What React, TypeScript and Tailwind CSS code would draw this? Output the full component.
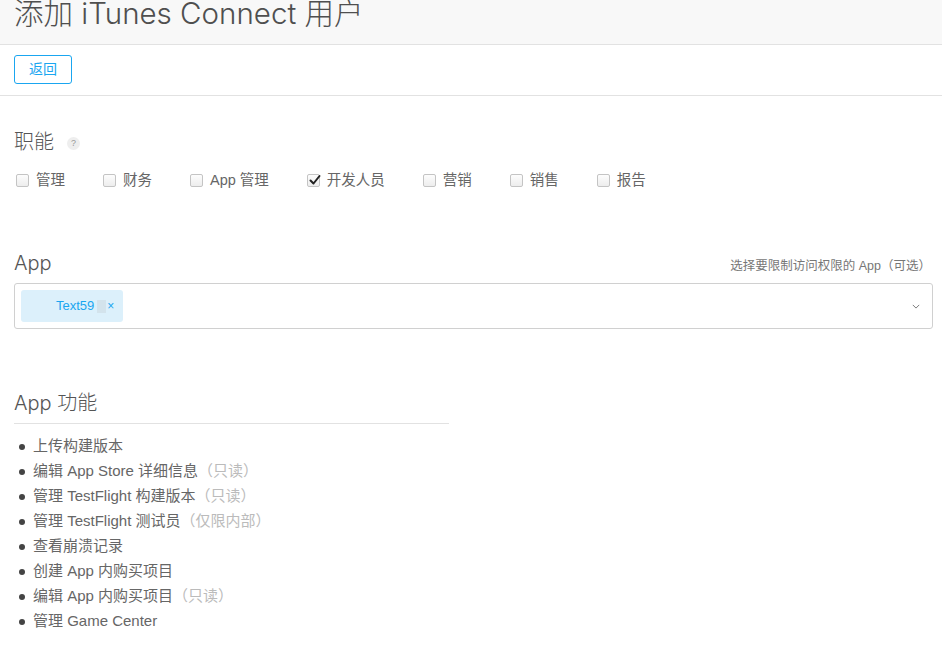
import React from "react";

const roles = [
  { label: "管理", checked: false },
  { label: "财务", checked: false },
  { label: "App 管理", checked: false },
  { label: "开发人员", checked: true },
  { label: "营销", checked: false },
  { label: "销售", checked: false },
  { label: "报告", checked: false },
];

const features: { text: string; note?: string }[] = [
  { text: "上传构建版本" },
  { text: "编辑 App Store 详细信息", note: "（只读）" },
  { text: "管理 TestFlight 构建版本", note: "（只读）" },
  { text: "管理 TestFlight 测试员", note: "（仅限内部）" },
  { text: "查看崩溃记录" },
  { text: "创建 App 内购买项目" },
  { text: "编辑 App 内购买项目", note: "（只读）" },
  { text: "管理 Game Center" },
];

const bodyFont = "font-['Liberation_Sans','Noto_Sans_CJK_SC',sans-serif]";
const headFont = "font-['Inter','Noto_Sans_CJK_SC',sans-serif] font-light";

function Checkbox({ checked }: { checked: boolean }) {
  return (
    <span className="relative w-[13px] h-[13px] border border-[#c4c4c4] rounded-[2px] bg-gradient-to-b from-[#fdfdfd] to-[#ededed] shrink-0">
      {checked && (
        <svg viewBox="0 0 14 14" className="absolute left-[0px] top-[-2px] w-[14px] h-[14px]">
          <path d="M2.5 7.5 L5.5 10.5 L11.5 3" fill="none" stroke="#222" strokeWidth="2" strokeLinecap="round" strokeLinejoin="round" />
        </svg>
      )}
    </span>
  );
}

export default function App() {
  return (
    <div className={`w-full min-h-screen bg-white text-[#666] ${bodyFont}`}>
      <div className="h-[45px] bg-[#f8f8f8] border-b border-[#e2e2e2] px-[14px] overflow-hidden">
        <h1 className={`text-[29.5px] leading-[30px] -mt-[2px] text-[#4f4f4f] whitespace-nowrap ${headFont}`}>
          添加 iTunes Connect 用户
        </h1>
      </div>

      <div className="h-[51px] px-[14px] pt-[10px] border-b border-[#e2e2e2]">
        <button className="w-[58px] h-[29px] border border-[#1aa6f0] rounded-[3px] text-[14px] text-[#1aa6f0] bg-white">
          返回
        </button>
      </div>

      <div className="pl-[14px] pr-[9px]">
        <div className="mt-[32px] flex items-center h-[28px]">
          <span className={`text-[20px] leading-[28px] text-[#555] ${headFont}`}>职能</span>
          <span className="ml-[13px] w-[13px] h-[13px] rounded-full bg-[#eee] text-[#999] text-[9px] leading-[13px] text-center mt-[3px]">?</span>
        </div>

        <div className="mt-[14px] flex items-center gap-[38px] h-[20px] pl-[2px]">
          {roles.map((r) => (
            <label key={r.label} className="flex items-center gap-[7px] text-[14.5px] leading-[20px] text-[#666]">
              <Checkbox checked={r.checked} />
              <span>{r.label}</span>
            </label>
          ))}
        </div>

        <div className="mt-[59px] flex items-end justify-between h-[28px]">
          <span className={`text-[20px] leading-[28px] text-[#555] ${headFont}`}>App</span>
          <span className="text-[12.5px] leading-[16px] text-[#777] pr-[2px] mb-[3px]">选择要限制访问权限的 App（可选）</span>
        </div>

        <div className="mt-[6px] h-[46px] border border-[#d0d0d0] rounded-[3px] flex items-center pl-[6px] pr-[12px]">
          <div className="h-[32px] w-[102px] bg-[#dcf0fb] rounded-[3px] flex items-center pl-[35px]">
            <span className="text-[13px] text-[#1aa6f0]">Text59</span>
            <span className="ml-[3px] w-[9px] h-[13px] bg-[#d3e3ec]" />
            <span className="ml-[1px] text-[12px] text-[#1aa6f0] leading-none">×</span>
          </div>
          <div className="flex-1" />
          <svg viewBox="0 0 10 6" className="w-[8px] h-[5px]">
            <path d="M1 1 L5 5 L9 1" fill="none" stroke="#777" strokeWidth="1.2" />
          </svg>
        </div>

        <div className={`mt-[60px] w-[435px] border-b border-[#e2e2e2] pb-[6px] text-[20px] leading-[28px] text-[#555] ${headFont}`}>
          App 功能
        </div>

        <ul className="mt-[10px] pb-[20px]">
          {features.map((f) => (
            <li key={f.text} className="flex items-center h-[25px] text-[15px]">
              <span className="ml-[5px] w-[6px] h-[6px] rounded-full bg-[#444]" />
              <span className="ml-[8px] text-[#666]">{f.text}</span>
              {f.note && <span className="text-[#bbb]">{f.note}</span>}
            </li>
          ))}
        </ul>
      </div>
    </div>
  );
}
